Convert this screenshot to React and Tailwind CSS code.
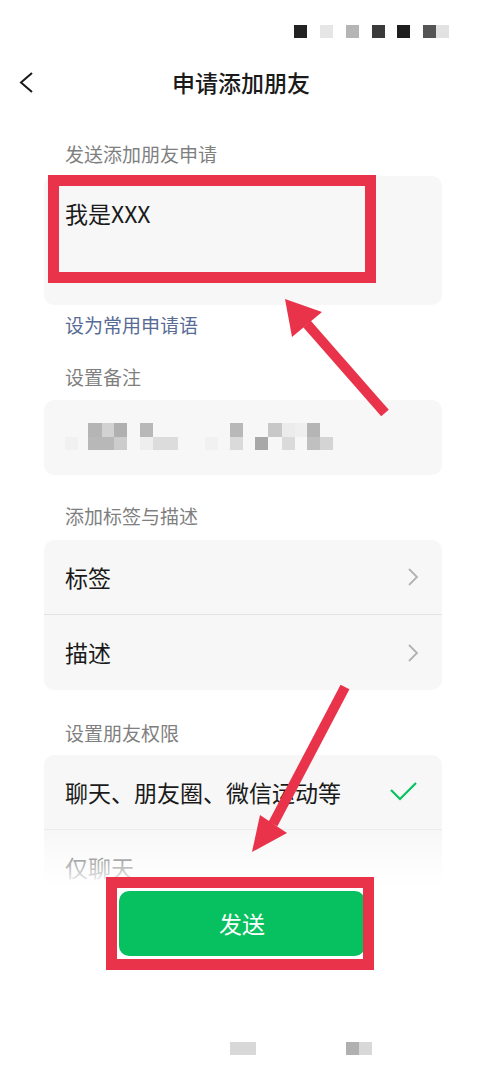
import React from 'react';

const font = { fontFamily: '"Noto Sans CJK SC", "Noto Sans", sans-serif' };

const statusSquares = [
    { x: 0, c: '#222222' },
    { x: 26, c: '#e6e6e6' },
    { x: 52, c: '#b5b5b5' },
    { x: 78, c: '#3a3a3a' },
    { x: 103, c: '#1e1e1e' },
    { x: 129, c: '#555555' },
    { x: 142, c: '#e2e2e2' },
];

// pixelated remark name (blurred in the screenshot)
const mosaic = [
    [21, 37, 13, 13, '#f1f1f1'],
    [44, 23, 14, 14, '#b5b5b5'],
    [58, 23, 12, 14, '#d2d2d2'],
    [70, 23, 13, 14, '#b0b0b0'],
    [96, 23, 13, 14, '#b8b8b8'],
    [186, 23, 13, 14, '#b8b8b8'],
    [224, 23, 14, 14, '#c8c8c8'],
    [238, 23, 13, 14, '#ececec'],
    [251, 23, 12, 14, '#efefef'],
    [263, 23, 13, 14, '#b5b5b5'],
    [44, 37, 26, 13, '#b8b8b8'],
    [70, 37, 13, 13, '#cccccc'],
    [96, 37, 13, 13, '#eeeeee'],
    [109, 37, 25, 13, '#dcdcdc'],
    [161, 37, 13, 13, '#f1f1f1'],
    [186, 37, 13, 13, '#dadada'],
    [211, 37, 13, 13, '#a8a8a8'],
    [238, 37, 13, 13, '#dadada'],
    [263, 37, 13, 13, '#c0c0c0'],
    [276, 37, 13, 13, '#d4d4d4'],
];

const Chevron = () => (
    <svg width="12" height="20" viewBox="0 0 12 20" fill="none" stroke="#b2b2b2" strokeWidth="1.8">
        <polyline points="2,2 10,10 2,18" />
    </svg>
);

const Label = ({ children, className = '' }) => (
    <div className={`h-[24px] pl-[21px] text-[19px] leading-[24px] text-[#7f7f7f] ${className}`}>{children}</div>
);

const App = () => {
    return (
        <div className="relative h-[1080px] w-[486px] overflow-hidden bg-white" style={font}>
            {/* Status bar */}
            <div className="flex h-[55px] justify-end pr-[37px] pt-[25px]">
                <svg width="155" height="13" viewBox="0 0 155 13">
                    {statusSquares.map((s, i) => (
                        <rect key={i} x={s.x} y="0" width="13" height="13" fill={s.c} />
                    ))}
                </svg>
            </div>

            {/* Header */}
            <div className="relative flex h-[55px] items-center justify-center">
                <div className="absolute left-[18px] top-[17px]">
                    <svg width="16" height="22" viewBox="0 0 16 22" fill="none" stroke="#1a1a1a" strokeWidth="2">
                        <polyline points="14,1 3,10.5 14,20" />
                    </svg>
                </div>
                <h1 className="ml-[-4px] text-[23px] font-medium text-[#1a1a1a]">申请添加朋友</h1>
            </div>

            {/* Content */}
            <div className="px-[44px]">
                <Label className="mt-[32px]">发送添加朋友申请</Label>
                <div className="mt-[10px] h-[129px] rounded-[10px] bg-[#f7f7f7] pl-[21px] pt-[22px]">
                    <div className="text-[23px] leading-[30px] text-[#1a1a1a]">我是XXX</div>
                </div>

                <Label className="mt-[8px] text-[#576b95]">设为常用申请语</Label>

                <Label className="mt-[28px]">设置备注</Label>
                <div className="mt-[11px] h-[75px] rounded-[10px] bg-[#f7f7f7]">
                    <svg width="398" height="75" viewBox="0 0 398 75">
                        {mosaic.map(([x, y, w, h, c], i) => (
                            <rect key={i} x={x} y={y} width={w} height={h} fill={c} />
                        ))}
                    </svg>
                </div>

                <Label className="mt-[29px]">添加标签与描述</Label>
                <div className="mt-[12px] rounded-[10px] bg-[#f7f7f7]">
                    <div className="flex h-[75px] items-center justify-between border-b border-[#e3e3e3] pl-[21px] pr-[23px]">
                        <span className="text-[23px] text-[#1a1a1a]">标签</span>
                        <Chevron />
                    </div>
                    <div className="flex h-[75px] items-center justify-between pl-[21px] pr-[23px]">
                        <span className="text-[23px] text-[#1a1a1a]">描述</span>
                        <Chevron />
                    </div>
                </div>

                <Label className="mt-[31px]">设置朋友权限</Label>
                <div className="mt-[10px] rounded-[10px] bg-[#f7f7f7]">
                    <div className="flex h-[75px] items-center justify-between border-b border-[#ececec] pl-[21px] pr-[24px]">
                        <span className="text-[23px] text-[#1a1a1a]">聊天、朋友圈、微信运动等</span>
                        <svg width="28" height="20" viewBox="0 0 28 20" fill="none" stroke="#07c160" strokeWidth="2.2">
                            <polyline points="1,8 10,17 26,1" />
                        </svg>
                    </div>
                    <div className="flex h-[75px] items-center pl-[21px]">
                        <span className="text-[23px] text-[#1a1a1a]">仅聊天</span>
                    </div>
                </div>
            </div>

            {/* Bottom sheet with send button */}
            <div className="absolute bottom-0 left-0 right-0 flex h-[250px] flex-col">
                <div className="h-[58px] bg-gradient-to-b from-white/0 via-white/60 to-white" />
                <div className="flex flex-1 flex-col items-center bg-white pt-[3px]">
                    <button className="ml-[-2px] flex h-[65px] w-[246px] items-center justify-center rounded-[10px] bg-[#07c160] text-[23px] text-white">
                        发送
                    </button>
                    <div className="mt-[86px] flex w-full">
                        <svg width="486" height="13" viewBox="0 0 486 13">
                            <rect x="230" y="0" width="26" height="13" fill="#d8d8d8" />
                            <rect x="346" y="0" width="13" height="13" fill="#b0b0b0" />
                            <rect x="359" y="0" width="13" height="13" fill="#d8d8d8" />
                        </svg>
                    </div>
                </div>
            </div>

            {/* Red annotation boxes */}
            <div className="pointer-events-none absolute left-[48px] top-[175px] h-[108px] w-[328px] border-[11px] border-[#e8334a]" />
            <div className="pointer-events-none absolute left-[106px] top-[877px] h-[93px] w-[268px] border-[11px] border-[#e8334a]" />

            {/* Red annotation arrows */}
            <svg className="pointer-events-none absolute left-0 top-0" width="486" height="1080" viewBox="0 0 486 1080">
                <line x1="385" y1="413" x2="307" y2="324" stroke="#e8334a" strokeWidth="10" />
                <polygon points="285,299 292,337 322,312" fill="#e8334a" />
                <line x1="345" y1="687" x2="273" y2="824" stroke="#e8334a" strokeWidth="10" />
                <polygon points="252,852 260,815 287,833" fill="#e8334a" />
            </svg>
        </div>
    );
};

export default App;
